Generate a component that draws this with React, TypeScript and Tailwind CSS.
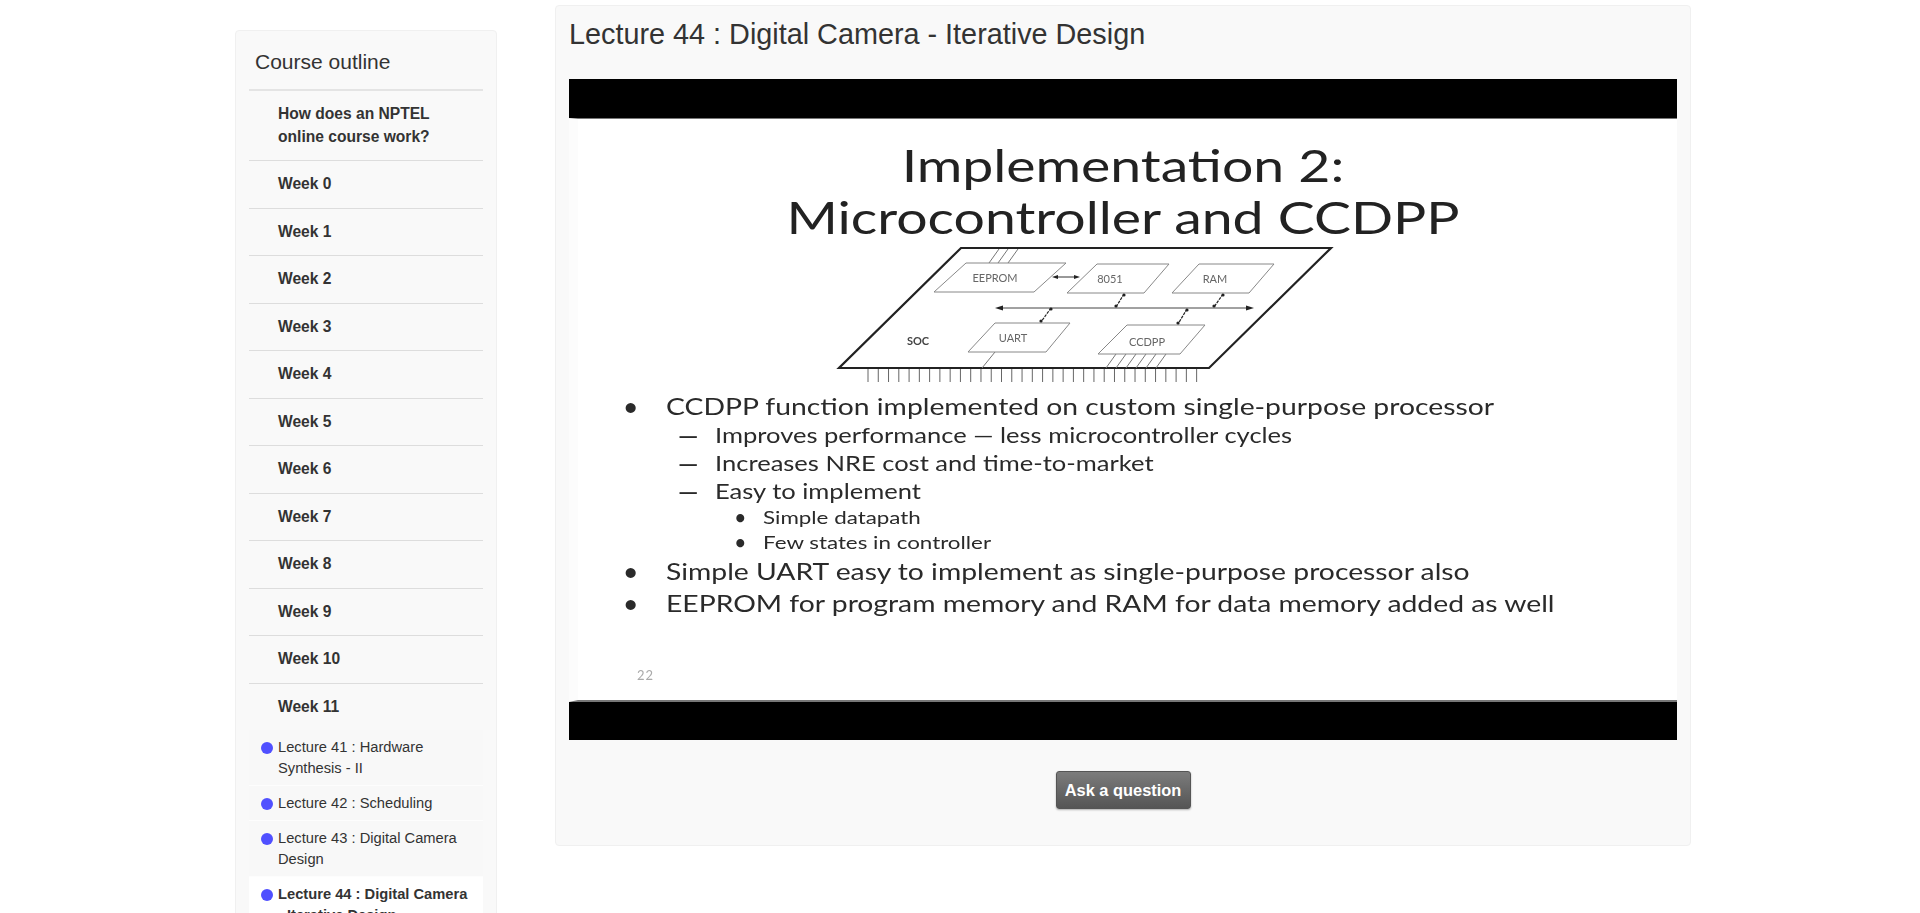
const weeks = ["Week 0", "Week 1", "Week 2", "Week 3", "Week 4", "Week 5", "Week 6", "Week 7", "Week 8", "Week 9", "Week 10", "Week 11"];

const lectures = [
  { title: "Lecture 41 : Hardware Synthesis - II" },
  { title: "Lecture 42 : Scheduling" },
  { title: "Lecture 43 : Digital Camera Design" },
  { title: "Lecture 44 : Digital Camera - Iterative Design", current: true },
];

const boxes = [
  { points: "146,32 246,32 214,61 114,61", label: "EEPROM", x: 175, y: 51 },
  { points: "277,33 349,33 324,62 247,62", label: "8051", x: 290, y: 52 },
  { points: "379,33 454,33 429,62 352,62", label: "RAM", x: 395, y: 52 },
  { points: "175,92 250,92 226,121 148,121", label: "UART", x: 193, y: 111 },
  { points: "307,94 385,94 360,123 278,123", label: "CCDPP", x: 327, y: 115 },
];

const links = [
  [304, 63, 296, 76],
  [403, 63, 394, 76],
  [231, 77, 221, 91],
  [367, 78, 358, 93],
];

function SocDiagram() {
  const pins = Array.from({ length: 33 }, (_, i) => 48 + i * 10.27);
  const ccdppPins = Array.from({ length: 6 }, (_, i) => i);
  return (
    <svg width="525" height="147" viewBox="0 13 525 147" className="block mt-[1px] ml-[242px] blur-[0.4px]">
      {/* chip outline */}
      <polygon points="141,17 511,17 389,137 19,137" fill="none" stroke="#222" strokeWidth="2.2" />
      {pins.map((x) => (
        <line key={x} x1={x} y1="138" x2={x} y2="151" stroke="#666" strokeWidth="1" />
      ))}
      {[169, 178, 188].map((x) => (
        <line key={x} x1={x} y1="32" x2={x + 10} y2="18" stroke="#777" strokeWidth="1" />
      ))}
      {ccdppPins.map((i) => (
        <line key={i} x1={296 + i * 10} y1="123" x2={286 + i * 10} y2="137" stroke="#777" strokeWidth="1" />
      ))}
      <line x1="175" y1="121" x2="162" y2="137" stroke="#777" strokeWidth="1" />
      {boxes.map((b) => (
        <g key={b.label}>
          <polygon points={b.points} fill="#fff" stroke="#888" strokeWidth="1" />
          <text x={b.x} y={b.y} textAnchor="middle" fontSize="11" fill="#666" fontFamily="Lato, sans-serif">
            {b.label}
          </text>
        </g>
      ))}
      <text x="98" y="114" textAnchor="middle" fontSize="11" fontWeight="700" fill="#444" fontFamily="Lato, sans-serif">
        SOC
      </text>
      {/* bus */}
      <line x1="180" y1="77" x2="430" y2="77" stroke="#444" strokeWidth="1" />
      <polygon points="175,77 183,74.5 183,79.5" fill="#222" />
      <polygon points="434,77 426,74.5 426,79.5" fill="#222" />
      <line x1="235" y1="46" x2="257" y2="46" stroke="#333" strokeWidth="1" />
      <polygon points="232,46 238,44 238,48" fill="#222" />
      <polygon points="260,46 254,44 254,48" fill="#222" />
      {links.map(([x1, y1, x2, y2]) => (
        <g key={x1}>
          <line x1={x1} y1={y1} x2={x2} y2={y2} stroke="#222" strokeWidth="1.2" strokeDasharray="3 1" />
          <circle cx={x1} cy={y1 + 1} r="1.6" fill="#222" />
          <circle cx={x2} cy={y2 - 1} r="1.6" fill="#222" />
        </g>
      ))}
    </svg>
  );
}

// the video frame is stretched sideways, so the slide text is too
function Stretched({ children }: { children: string }) {
  return <span className="inline-block origin-left scale-x-[1.23] whitespace-nowrap">{children}</span>;
}

function Slide() {
  return (
    <div className="h-[584px] bg-white border-t border-b-2 border-[#777] border-l-[9px] border-l-[#fcfcfc] pt-[20px] font-['Lato',sans-serif] text-[#2a2a2a] overflow-hidden">
      <div className="-ml-[9px] text-center text-[#222] text-[45px] leading-[52px] scale-x-[1.23]">
        <div>Implementation 2:</div>
        <div>Microcontroller and CCDPP</div>
      </div>
      <SocDiagram />
      <div className="mt-[2px] pl-[46px] blur-[0.3px]">
        <div className="flex items-center h-[27px] text-[23px]">
          <span className="w-[42px] font-bold">•</span>
          <Stretched>CCDPP function implemented on custom single-purpose processor</Stretched>
        </div>
        <div className="flex items-center h-[28px] mt-[2px] pl-[54px] text-[20.75px]">
          <span className="w-[37px] font-bold"><Stretched>—</Stretched></span>
          <Stretched>Improves performance — less microcontroller cycles</Stretched>
        </div>
        <div className="flex items-center h-[28px] pl-[54px] text-[20.75px]">
          <span className="w-[37px] font-bold"><Stretched>—</Stretched></span>
          <Stretched>Increases NRE cost and time-to-market</Stretched>
        </div>
        <div className="flex items-center h-[27px] pl-[54px] text-[20.75px]">
          <span className="w-[37px] font-bold"><Stretched>—</Stretched></span>
          <Stretched>Easy to implement</Stretched>
        </div>
        <div className="flex items-center h-[26px] pl-[111px] text-[18.2px]">
          <span className="w-[28px] font-bold">•</span>
          <Stretched>Simple datapath</Stretched>
        </div>
        <div className="flex items-center h-[24px] pl-[111px] text-[18.2px]">
          <span className="w-[28px] font-bold">•</span>
          <Stretched>Few states in controller</Stretched>
        </div>
        <div className="flex items-center h-[31px] mt-[1px] text-[23px]">
          <span className="w-[42px] font-bold">•</span>
          <Stretched>Simple UART easy to implement as single-purpose processor also</Stretched>
        </div>
        <div className="flex items-center h-[33px] text-[23px]">
          <span className="w-[42px] font-bold">•</span>
          <Stretched>EEPROM for program memory and RAM for data memory added as well</Stretched>
        </div>
        <div className="mt-[47px] pl-[13px] text-[13px] leading-[16px] tracking-[1px] text-[#aaa]">22</div>
      </div>
    </div>
  );
}

export default function App() {
  return (
    <div className="h-screen overflow-hidden bg-white font-['Liberation_Sans',Arial,sans-serif] text-[#333]">
      <div className="flex items-start pl-[235px]">
        {/* Course outline */}
        <aside className="w-[262px] h-[1000px] mt-[30px] shrink-0 bg-[#f9f9f9] border border-[#f0f0f0] rounded-[4px] px-[13px]">
          <h2 className="h-[60px] pl-[6px] pt-[19px] text-[21px] leading-[24px] font-normal border-b-2 border-[#e4e4e4]">Course outline</h2>
          <div className="pl-[29px] pr-4 py-3 border-b-[1px] border-[#ddd] text-[15.6px] leading-[22.5px] font-bold">How does an NPTEL online course work?</div>
          {weeks.map((week, i) => (
            <div key={week} className={`pl-[29px] py-3 text-[15.6px] leading-[22.5px] font-bold ${i < weeks.length - 1 ? "border-b-[1px] border-[#ddd]" : ""}`}>
              {week}
            </div>
          ))}
          {lectures.map((lecture) => (
            <div
              key={lecture.title}
              className={`relative pl-[29px] pr-2 pt-[7px] pb-[6px] text-[14.7px] leading-[21px] border-b-[1px] border-[#fdfdfd] ${lecture.current ? "bg-white font-bold" : "bg-[#f8f8f8]"}`}
            >
              <span className="absolute left-[12px] top-[12px] w-[12px] h-[12px] rounded-full bg-[#5050ff]" />
              {lecture.title}
            </div>
          ))}
        </aside>

        {/* Lecture video */}
        <main className="w-[1136px] h-[841px] mt-[5px] ml-[58px] shrink-0 bg-[#f9f9f9] border border-[#f0f0f0] rounded-[4px] px-[13px]">
          <h1 className="h-[73px] pt-[9px] text-[28.8px] leading-[38px] font-normal">Lecture 44 : Digital Camera - Iterative Design</h1>
          <div className="w-[1108px] bg-black pt-[39px] pb-[38px]">
            <Slide />
          </div>
          <div className="flex justify-center mt-[31px]">
            <button className="w-[135px] h-[38px] rounded-[3px] border border-[#555] bg-gradient-to-b from-[#7c7c7c] to-[#555] text-white text-[16.4px] font-bold shadow-[0_1px_2px_rgba(0,0,0,0.3)]">
              Ask a question
            </button>
          </div>
        </main>
      </div>
    </div>
  );
}
